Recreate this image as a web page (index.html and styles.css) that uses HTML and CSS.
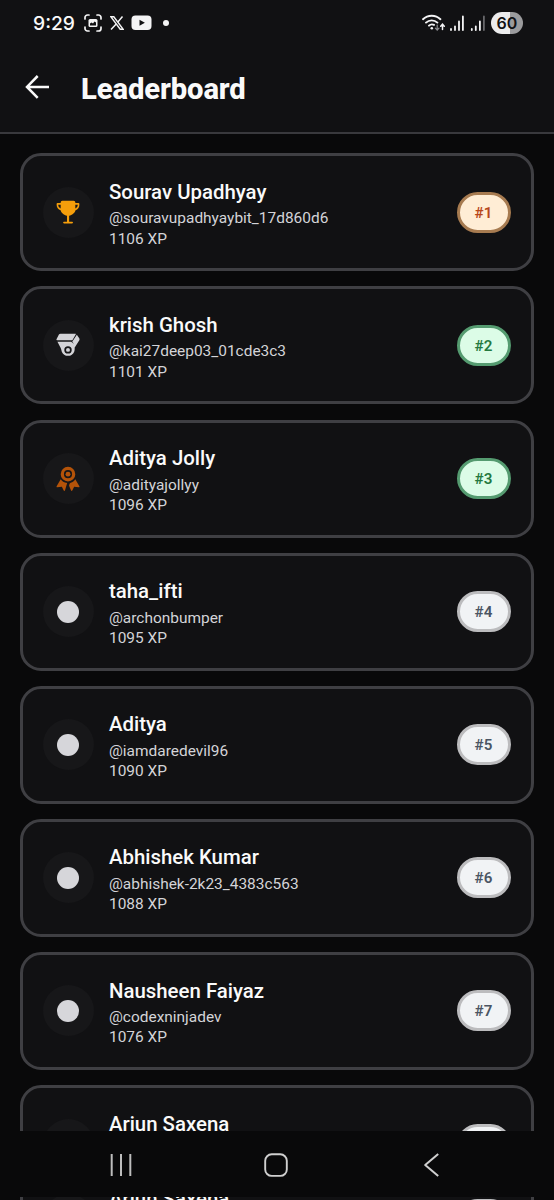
FILE: index.html
```html
<!DOCTYPE html>
<html lang="en">
<head>
    <meta charset="UTF-8">
    <meta name="viewport" content="width=device-width, initial-scale=1.0">
    <title>Leaderboard</title>
    <link rel="stylesheet" href="styles.css">
</head>
<body>
    <div class="status-bar">
        <span class="time">9:29</span>
        <svg class="capture" width="18" height="18" viewBox="0 0 18 18" fill="none" stroke="#f4f4f5" stroke-width="1.7" stroke-linecap="round">
            <path d="M1 5V3.5A2.5 2.5 0 0 1 3.5 1H5M13 1h1.500A2.500 2.500 0 0 1 17 3.500V5M17 13v1.500A2.500 2.500 0 0 1 14.500 17H13M5 17H3.500A2.500 2.500 0 0 1 1 14.500V13"/>
            <rect x="4.500" y="5" width="9" height="8" rx="1.500" fill="#f4f4f5" stroke="none"/>
            <path d="M6 11.500v-2l1.500-1 1.500 1 1.500-2 1.500 1v3z" fill="#111113" stroke="none"/>
        </svg>
        <svg class="x-logo" width="14" height="14" viewBox="0 0 14 14" fill="none" stroke="#f4f4f5">
            <path d="M1 .8h2.800l9.200 12.400h-2.800z" stroke-width="1.400"/>
            <path d="M12.500.5L7.900 5.900M6.200 7.900L1 13.500" stroke-width="1.500"/>
        </svg>
        <svg class="video" width="21" height="16" viewBox="0 0 21 16">
            <rect x=".5" y=".5" width="20" height="14.500" rx="4" fill="#f4f4f5"/>
            <path d="M8.500 4.800v6l5.400-3z" fill="#111113"/>
        </svg>
        <span class="dot"></span>
        <svg class="signals" width="64" height="18" viewBox="0 0 64 18" fill="none" stroke="#f4f4f5" stroke-linecap="round">
            <g stroke-width="1.900">
                <path d="M1 5.200a12.500 12.500 0 0 1 17.400 0M4 8.600a8.300 8.300 0 0 1 11.400 0M7 11.700a4.300 4.300 0 0 1 5 -.8"/>
            </g>
            <circle cx="9.800" cy="14.300" r="1.300" fill="#f4f4f5" stroke="none"/>
            <path d="M15.200 11v5M13.400 14.200l1.800 2 1.800-2" stroke="#8b8b8f" stroke-width="1.200"/>
            <path d="M20.500 15.500v-5M18.700 12.200l1.800-2 1.800 2" stroke-width="1.500"/>
            <path d="M29 15v1M33 12.300V16M37 7.500V16M40.900 2.500V16M49.800 15v1M53.800 12.300V16M57.900 7.500V16" stroke-width="1.800"/>
            <path d="M61.900 2.500V16" stroke="#68686b" stroke-width="1.800"/>
        </svg>
        <span class="battery">60</span>
    </div>

    <header class="header">
        <svg width="24" height="24" viewBox="0 0 24 24" fill="none" stroke="#fafafa" stroke-width="2.500">
            <path d="M12.700 1L2 11.900l10.700 10.900M2.200 11.900H24"/>
        </svg>
        <h1>Leaderboard</h1>
    </header>

    <main class="list" id="list"></main>

    <nav class="nav-bar">
        <svg width="24" height="24" viewBox="0 0 24 24" stroke="#bdbdbd" stroke-width="2">
            <path d="M2.700 1v22M12 1v22M21.300 1v22"/>
        </svg>
        <svg width="24" height="24" viewBox="0 0 24 24" fill="none" stroke="#d0d0d0" stroke-width="1.900">
            <rect x="1.200" y="1.300" width="21.600" height="21.600" rx="6.500"/>
        </svg>
        <svg width="24" height="24" viewBox="0 0 24 24" fill="none" stroke="#d0d0d0" stroke-width="2" stroke-linejoin="round">
            <path d="M19.200 1L6.200 12l13 11"/>
        </svg>
    </nav>

    <div class="under-nav" id="underNav"></div>

    <script src="script.js"></script>
</body>
</html>
```
FILE: styles.css
```css
* {
    box-sizing: border-box;
}
body {
    margin: 0;
    height: 1200px;
    display: flex;
    flex-direction: column;
    overflow: hidden;
    background-color: #09090a;
    color: #fafafa;
    font-family: Roboto, sans-serif;
}
svg {
    display: block;
    flex-shrink: 0;
}
.status-bar {
    display: flex;
    align-items: center;
    height: 46px;
    flex-shrink: 0;
    padding: 0 31px 0 33px;
    background-color: #111113;
}
.time {
    width: 51px;
    font-family: Inter, sans-serif;
    font-size: 19.3px;
    font-weight: 500;
}
.x-logo {
    margin-left: 8px;
}
.video {
    margin-left: 7px;
}
.dot {
    width: 6px;
    height: 6px;
    margin-left: 11px;
    border-radius: 50%;
    background-color: #f4f4f5;
}
.signals {
    margin-left: auto;
}
.battery {
    width: 32px;
    height: 22px;
    margin-left: 5px;
    border-radius: 11px;
    background: linear-gradient(to right, #ececed 60%, #9b9b9d 60%);
    color: #111113;
    font-family: Inter, sans-serif;
    font-size: 16px;
    font-weight: 600;
    line-height: 22px;
    text-align: center;
}
.header {
    display: flex;
    align-items: center;
    height: 88px;
    flex-shrink: 0;
    padding: 0 25px 5px;
    border-bottom: 2px solid #39393d;
    background-color: #111113;
}
.header h1 {
    margin: 4px 0 0 32px;
    font-size: 29.2px;
    font-weight: 800;
    letter-spacing: -0.1px;
    line-height: 36px;
}
.list {
    flex: 1;
    min-height: 0;
    display: flex;
    flex-direction: column;
    gap: 15.1px;
    padding: 19.4px 20px 0;
    overflow: hidden;
}
.card {
    display: flex;
    align-items: center;
    height: 118px;
    flex-shrink: 0;
    padding: 0 20px;
    border: 3px solid #3f3f43;
    border-radius: 21px;
    background-color: #111113;
}
.avatar {
    display: flex;
    align-items: center;
    justify-content: center;
    width: 51px;
    height: 51px;
    padding-right: 1px;
    border-radius: 50%;
    background-color: #171719;
}
.circle {
    width: 22px;
    height: 22px;
    border-radius: 50%;
    background-color: #d6d6da;
}
.info {
    flex: 1;
    align-self: flex-start;
    margin-left: 15px;
    padding-top: 22.6px;
}
.name {
    margin-bottom: 2.4px;
    font-size: 20.4px;
    font-weight: 500;
    line-height: 27px;
}
.handle,
.xp {
    color: #d4d4d8;
    font-size: 15.45px;
    line-height: 20.5px;
}
.badge {
    width: 54px;
    height: 41px;
    padding-right: 1px;
    border: 3px solid #bcbcbe;
    border-radius: 21px;
    background-color: #f1f3f5;
    color: #4b5563;
    font-size: 15.2px;
    font-weight: 600;
    line-height: 36px;
    text-align: center;
}
.badge.gold {
    border-color: #a77b50;
    background-color: #ffedd5;
    color: #b8481b;
}
.badge.green {
    border-color: #559b70;
    background-color: #dcfce7;
    color: #25793f;
}
.nav-bar {
    display: flex;
    align-items: center;
    justify-content: space-between;
    height: 66px;
    flex-shrink: 0;
    padding: 2px 111px 0 109px;
    background-color: #09090a;
}
.under-nav {
    height: 3px;
    flex-shrink: 0;
    padding: 0 20px;
    overflow: hidden;
}
.under-nav .card {
    margin-top: -37px;
}
```
FILE: script.js
```js
const players = [
    { name: 'Sourav Upadhyay', handle: 'souravupadhyaybit_17d860d6', xp: 1106 },
    { name: 'krish Ghosh', handle: 'kai27deep03_01cde3c3', xp: 1101 },
    { name: 'Aditya Jolly', handle: 'adityajollyy', xp: 1096 },
    { name: 'taha_ifti', handle: 'archonbumper', xp: 1095 },
    { name: 'Aditya', handle: 'iamdaredevil96', xp: 1090 },
    { name: 'Abhishek Kumar', handle: 'abhishek-2k23_4383c563', xp: 1088 },
    { name: 'Nausheen Faiyaz', handle: 'codexninjadev', xp: 1076 },
    { name: 'Arjun Saxena' }
];

// Trophy, medal and ribbon for the top three
const icons = [
    `<svg width="26" height="26" viewBox="0 0 512 512" fill="#f59e0b">
        <path d="M112 64a32 32 0 0 1 32-32h224a32 32 0 0 1 32 32v16h64a16 16 0 0 1 16 16v16c0 54-30 95-76 108-12 55-71 98-126 111v117h60a16 16 0 0 1 0 32H176a16 16 0 0 1 0-32h60V331c-55-13-114-56-126-111-46-13-78-54-78-108V96a16 16 0 0 1 16-16h64zm0 48H64c0 32 18 62 47 73 2-25 1-48 1-73zm288 0c0 25-1 48 1 73 29-11 47-41 47-73z"/>
    </svg>`,
    `<svg width="26" height="26" viewBox="0 0 512 512" fill="#d4d4d8">
        <path d="M108 32h292c12 0 14 8 8 18l-66 112H38c-10 0-14-8-9-18l48-94c7-12 16-18 31-18zM430 52l50 78c6 10 5 20-1 30l-100 160c-2-60-12-106-40-126zM48 190h270c52 24 70 72 70 138 0 24-4 40-10 60a132 132 0 0 1-244 0c-10-24-10-48-22-72z"/>
        <circle cx="256" cy="352" r="56" fill="none" stroke="#171719" stroke-width="34"/>
    </svg>`,
    `<svg width="26" height="26" viewBox="0 0 512 512" fill="#b45309">
        <circle cx="256" cy="160" r="48"/>
        <path fill-rule="evenodd" d="M256 16a144 144 0 1 1 0 288 144 144 0 0 1 0-288zm0 64a80 80 0 1 0 0 160 80 80 0 0 0 0-160z"/>
        <path d="M112 261c24 38 64 68 128 73l-44 150c-5 10-19 10-24 0l-37-75-90 8c-13 1-18-10-13-20zM400 261c-22 35-51 57-91 68-12 4-19 12-24 24l-8 37 39 94c5 10 19 10 24 0l37-75 90 8c13 1 18-10 13-20z"/>
    </svg>`
];

const badgeColors = ['gold', 'green', 'green'];

function cardHTML(player, i) {
    return `
        <div class="card">
            <div class="avatar">${icons[i] || '<span class="circle"></span>'}</div>
            <div class="info">
                <div class="name">${player.name}</div>
                ${player.handle ? `<div class="handle">@${player.handle}</div>` : ''}
                ${player.xp ? `<div class="xp">${player.xp} XP</div>` : ''}
            </div>
            <div class="badge ${badgeColors[i] || ''}">#${i + 1}</div>
        </div>
    `;
}

document.getElementById('list').innerHTML = players.map(cardHTML).join('');
// The list continues below the navigation bar
document.getElementById('underNav').innerHTML = cardHTML(players[7], 7);
```
